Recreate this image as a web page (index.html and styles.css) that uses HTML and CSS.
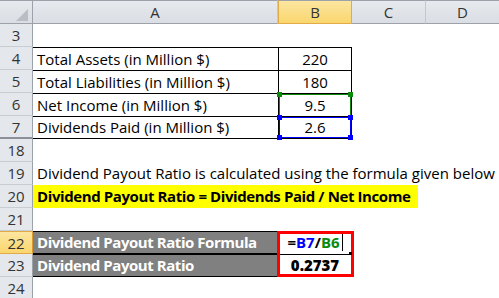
FILE: index.html
```html
<!DOCTYPE html>
<html lang="en">
<head>
  <meta charset="UTF-8" />
  <title>Dividend Payout Ratio</title>
  <link rel="stylesheet" href="styles.css">
</head>
<body>
  <div class="sheet">
    <!-- column headers -->
    <div class="corner"><span class="tri"></span></div>
    <div class="col-head">A</div>
    <div class="col-head active">B</div>
    <div class="col-head">C</div>
    <div class="col-head last">D</div>

    <div class="row-head">3</div>
    <div class="cell"></div><div class="cell"></div><div class="cell"></div><div class="cell"></div>

    <div class="row-head">4</div>
    <div class="cell tbl">Total Assets (in Million $)</div>
    <div class="cell tbl num">220</div>
    <div class="cell"></div><div class="cell"></div>

    <div class="row-head">5</div>
    <div class="cell tbl">Total Liabilities (in Million $)</div>
    <div class="cell tbl num">180</div>
    <div class="cell"></div><div class="cell"></div>

    <div class="row-head">6</div>
    <div class="cell tbl">Net Income (in Million $)</div>
    <div class="cell tbl num ref ref-green">9.5
      <span class="knob tl"></span><span class="knob tr"></span>
    </div>
    <div class="cell"></div><div class="cell"></div>

    <div class="row-head hidden-below">7</div>
    <div class="cell tbl last-row">Dividends Paid (in Million $)</div>
    <div class="cell tbl num last-row ref ref-blue">2.6
      <span class="knob tl"></span><span class="knob tr"></span>
      <span class="knob bl"></span><span class="knob br"></span>
    </div>
    <div class="cell"></div><div class="cell"></div>

    <div class="row-head">18</div>
    <div class="cell"></div><div class="cell"></div><div class="cell"></div><div class="cell"></div>

    <div class="row-head">19</div>
    <div class="cell span">Dividend Payout Ratio is calculated using the formula given below</div>

    <div class="row-head">20</div>
    <div class="cell span"><span class="mark">Dividend Payout Ratio = Dividends Paid / Net Income</span></div>

    <div class="row-head">21</div>
    <div class="cell"></div><div class="cell"></div><div class="cell"></div><div class="cell"></div>

    <div class="row-head active">22</div>
    <div class="cell dark">Dividend Payout Ratio Formula</div>
    <div class="cell result top num">
      <span class="formula">=<span class="f-blue">B7</span>/<span class="f-green">B6</span></span><span class="caret"></span>
      <span class="fill-handle"></span>
    </div>
    <div class="cell"></div><div class="cell"></div>

    <div class="row-head">23</div>
    <div class="cell dark">Dividend Payout Ratio</div>
    <div class="cell result bottom num"><b>0.2737</b></div>
    <div class="cell"></div><div class="cell"></div>

    <div class="row-head">24</div>
    <div class="cell"></div><div class="cell"></div><div class="cell"></div><div class="cell"></div>
  </div>
</body>
</html>
```

FILE: styles.css
```css
body {
  margin: 0;
  background: #fff;
  font-family: 'Open Sans', sans-serif;
  font-size: 15px;
  color: #000;
  overflow: hidden;
}

/* Sheet grid */
.sheet {
  display: grid;
  grid-template-columns: 33px 245px 74px 74px 73px;
  grid-template-rows: 24px;
  grid-auto-rows: 23px;
  width: 499px;
}

.corner,
.col-head {
  box-sizing: border-box;
  background: linear-gradient(#e6e9ee, #dadee4);
  border-top: 1px solid #9da2aa;
  border-bottom: 1px solid #9da2aa;
  border-right: 1px solid #c3c7ce;
  color: #333;
  text-align: center;
  line-height: 22px;
}

.col-head.last {
  border-right: none;
}

.col-head.active {
  background: linear-gradient(#fce6a0, #f9d66e);
  border: 1px solid #e3ab48;
  border-top-color: #9da2aa;
}

.corner {
  position: relative;
  border-right-color: #9da2aa;
}

.corner .tri {
  position: absolute;
  right: 4px;
  bottom: 2px;
  width: 0;
  height: 0;
  border-left: 12px solid transparent;
  border-bottom: 12px solid #b9bdc4;
}

.row-head {
  box-sizing: border-box;
  background: #e4e7ec;
  border-right: 1px solid #9da2aa;
  border-bottom: 1px solid #c8ccd3;
  color: #333;
  text-align: center;
  line-height: 22px;
}

.row-head.hidden-below {
  border-bottom: 2px solid #8c9199;
}

.row-head.active {
  background: linear-gradient(#fce6a0, #f9d66e);
  border: 1px solid #e3ab48;
  border-left: none;
  border-right-color: #d89a30;
}

/* Cells */
.cell {
  box-sizing: border-box;
  padding: 0 4px;
  line-height: 23px;
  white-space: nowrap;
  position: relative;
}

.cell.span {
  grid-column: 2 / -1;
}

.tbl {
  border-top: 1px solid #000;
  line-height: 22px;
}

.tbl.num {
  border-left: 1px solid #000;
  border-right: 1px solid #000;
}

.tbl.last-row {
  border-bottom: 1px solid #000;
  line-height: 21px;
}

.num {
  text-align: center;
}

.mark {
  display: block;
  box-sizing: border-box;
  width: 385px;
  margin-left: -4px;
  padding-left: 4px;
  background: #ffff00;
  font-weight: 700;
  letter-spacing: -0.4px;
}

.dark {
  background: #808080;
  color: #fff;
  font-weight: 700;
  letter-spacing: -0.45px;
  border-top: 1px solid #000;
  border-bottom: 1px solid #000;
  line-height: 21px;
}

.dark + .dark {
  border-top: none;
}

/* Reference highlight while editing */
.ref::after {
  content: "";
  position: absolute;
  inset: 0;
  border: 1px solid;
}

.ref-green::after {
  border-color: #0b8a0b;
  border-bottom: none;
}

.ref-blue::after {
  border-color: #0000ff;
}

.knob {
  position: absolute;
  width: 5px;
  height: 5px;
  z-index: 2;
}

.ref-green .knob { background: #0b8a0b; }
.ref-blue .knob { background: #0000ff; }

.knob.tl { left: -2px; top: -2px; }
.knob.tr { right: -2px; top: -2px; }
.knob.bl { left: -2px; bottom: -2px; }
.knob.br { right: -2px; bottom: -2px; }

/* Result block with red frame */
.result {
  font-weight: 700;
}

.result.top::before {
  content: "";
  position: absolute;
  left: -1px;
  top: 0;
  width: 77px;
  height: 46px;
  box-sizing: border-box;
  border: 3px solid #ff0000;
  z-index: 3;
}

.result.bottom {
  border-top: 1px solid #000;
  line-height: 21px;
}

.f-blue { color: #0000ff; }
.f-green { color: #0b8a0b; }

.caret {
  display: inline-block;
  width: 1px;
  height: 17px;
  margin-left: 2px;
  background: #000;
  vertical-align: -3px;
}

.fill-handle {
  position: absolute;
  right: 0;
  bottom: -1px;
  width: 3px;
  height: 3px;
  background: #000;
  z-index: 4;
}
```
